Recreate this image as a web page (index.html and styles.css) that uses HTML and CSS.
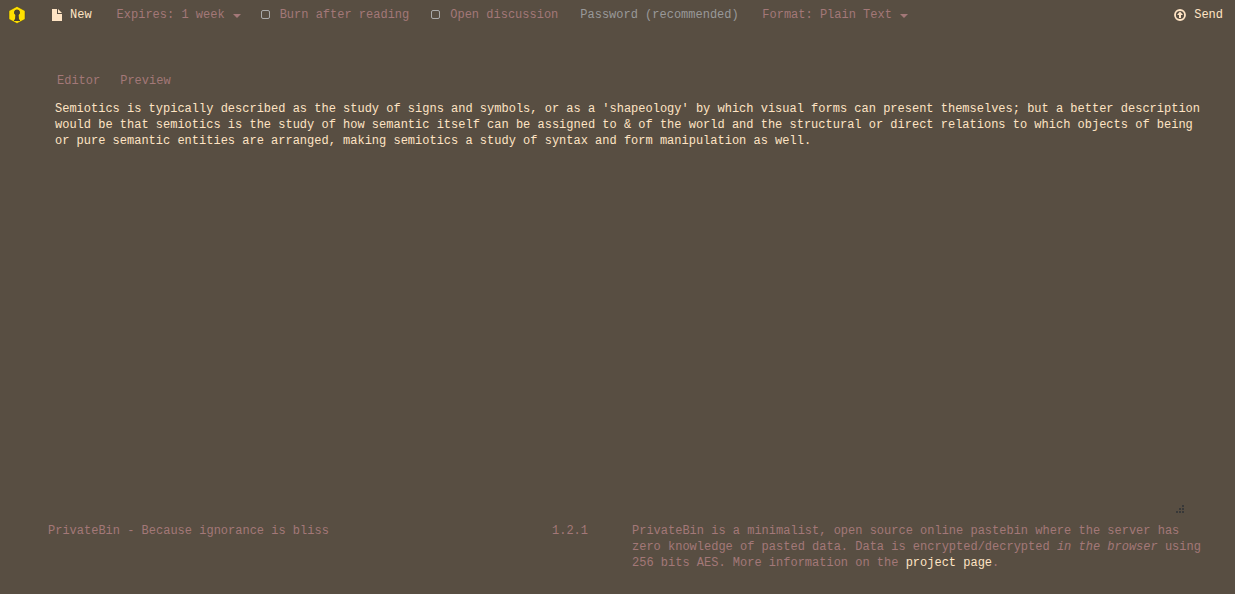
FILE: index.html
```html
<!DOCTYPE html>
<html lang="en">
<head>
<meta charset="utf-8">
<title>PrivateBin</title>
<link rel="stylesheet" href="styles.css">
</head>
<body>
<header class="navbar">
  <a class="brand" href="#" aria-label="PrivateBin"><svg width="18" height="18" viewBox="0 0 18 18"><path fill="#ffe000" stroke="#4a4022" stroke-width=".5" d="M9 .4l8 4.400v8.400L9 17.600l-8-4.400V4.800z"/><path fill="#4a4230" d="M9 3.500a3 3 0 0 1 1.700 5.500L11 13.200l1 .8v1H6v-1l1-.8.3-4.200A3 3 0 0 1 9 3.500z"/></svg></a>
  <button class="action new" type="button"><svg width="10" height="12" viewBox="0 0 10 12"><path fill="currentColor" d="M0 0h5v5h5v7H0z"/><path fill="currentColor" d="M6 0l4 4H6z"/></svg>New</button>
  <button class="drop expires" type="button">Expires: 1 week <span class="caret"></span></button>
  <label class="check"><input type="checkbox">Burn after reading</label>
  <label class="check"><input type="checkbox">Open discussion</label>
  <input class="password" type="text" aria-label="Password" placeholder="Password (recommended)">
  <button class="drop" type="button">Format: Plain Text <span class="caret"></span></button>
  <button class="action send" type="button"><svg width="12" height="12" viewBox="0 0 12 12"><circle cx="6" cy="6" r="5" fill="none" stroke="currentColor" stroke-width="1.800"/><path fill="currentColor" d="M6 2.500L9 6H7v3H5V6H3z"/></svg>Send</button>
</header>
<main class="editor">
  <nav class="tabs"><a href="#">Editor</a><a href="#">Preview</a></nav>
  <div class="paste">
    <textarea class="message" aria-label="Paste text" spellcheck="false">Semiotics is typically described as the study of signs and symbols, or as a 'shapeology' by which visual forms can present themselves; but a better description would be that semiotics is the study of how semantic itself can be assigned to &amp; of the world and the structural or direct relations to which objects of being or pure semantic entities are arranged, making semiotics a study of syntax and form manipulation as well.</textarea>
    <svg class="grip" width="8" height="8" viewBox="0 0 8 8"><path fill="#383838" d="M6 0h2v2H6zM3 3h2v2H3zM6 3h2v2H6zM0 6h2v2H0zM3 6h2v2H3zM6 6h2v2H6z"/></svg>
  </div>
</main>
<footer class="footer">
  <p class="slogan">PrivateBin - Because ignorance is bliss</p>
  <p class="version">1.2.1</p>
  <p class="about">PrivateBin is a minimalist, open source online pastebin where the server has zero knowledge of pasted data. Data is encrypted/decrypted <i>in the browser</i> using 256 bits AES. More information on the <a href="#">project page</a>.</p>
</footer>
</body>
</html>
```
FILE: styles.css
```css
* { box-sizing: border-box; }
body {
  margin: 0;
  min-height: 100vh;
  display: flex;
  flex-direction: column;
  background: #584e42;
  color: #a37878;
  font: 12px/16px "Courier New", "Liberation Mono", monospace;
}
button, input, textarea { font: inherit; color: inherit; background: none; border: 0; padding: 0; margin: 0; }
a { color: inherit; text-decoration: none; }
p { margin: 0; }
.navbar { display: flex; align-items: center; height: 29px; padding: 0 12px 0 8px; }
.brand { display: flex; margin-right: 26px; }
.action { display: flex; align-items: center; gap: 8px; color: #ffe4c4; }
.new { margin-right: 25px; }
.drop { display: flex; align-items: center; gap: 8px; }
.caret { margin-top: 3px; border: 4px solid transparent; border-top-color: currentColor; border-bottom: 0; }
.expires { margin-right: 20px; }
.check { display: flex; align-items: center; gap: 10px; margin-right: 22px; }
.check input { appearance: none; width: 9px; height: 9px; border: 1px solid #aaa; border-radius: 2px; }
.password { width: 160px; margin-right: 22px; }
.password::placeholder { color: #999; opacity: 1; }
.send { margin-left: auto; }
.editor { flex: 1; display: flex; flex-direction: column; padding: 44px 24px 8px 48px; }
.tabs { display: flex; gap: 20px; padding-left: 9px; }
.paste { position: relative; flex: 1; display: flex; margin-top: 6px; }
.message { flex: 1; resize: none; outline: 0; padding: 6px 7px; color: #ffe4c4; }
.grip { position: absolute; right: 27px; bottom: 2px; }
.footer { display: flex; align-items: flex-start; padding: 0 24px 23px 48px; }
.slogan { flex: 0 0 504px; }
.version { flex: 0 0 80px; }
.about { flex: 1; }
.about a { color: #ffe4c4; }
```
